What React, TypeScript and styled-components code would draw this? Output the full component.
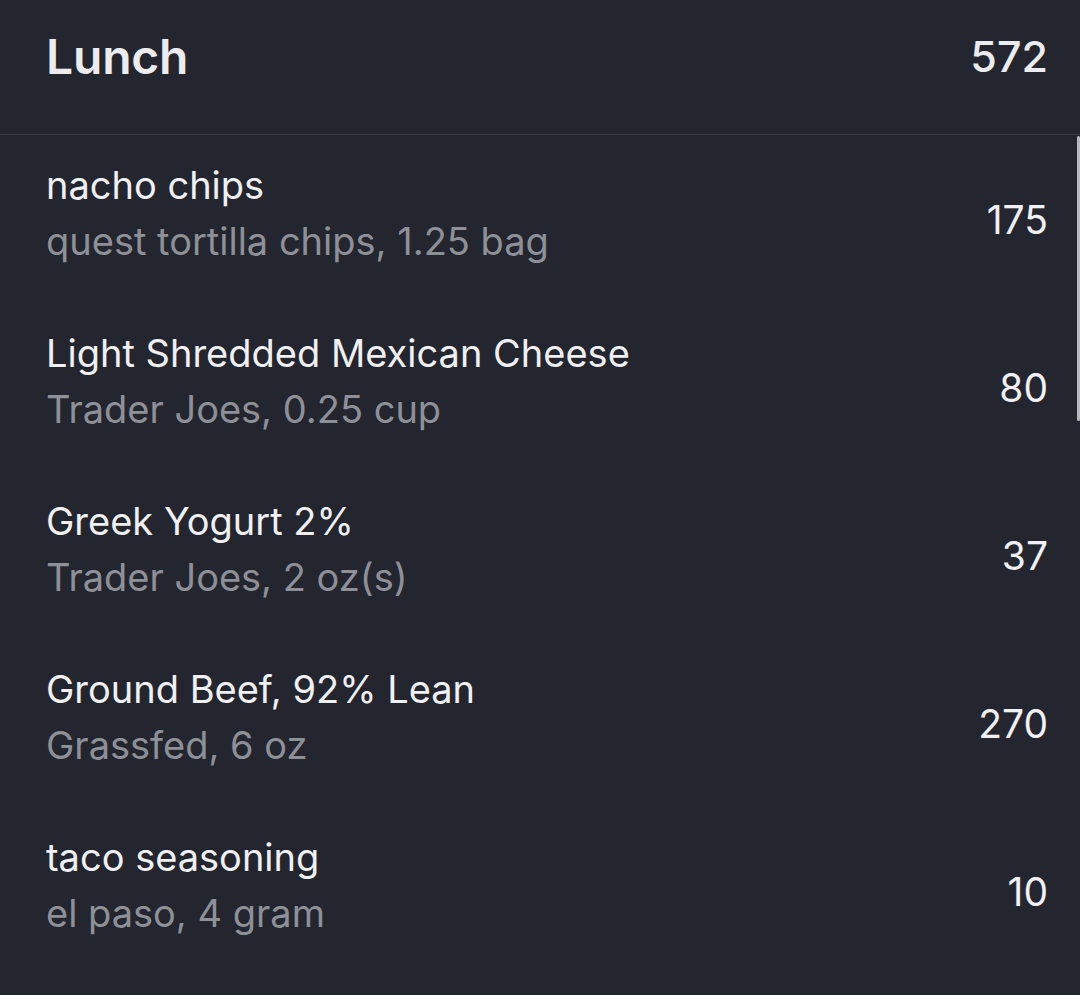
import React from "react";
import styled, { createGlobalStyle } from "styled-components";

const GlobalStyle = createGlobalStyle`
  html, body {
    margin: 0;
    padding: 0;
    background: #24262f;
  }
  body {
    font-family: Inter, "Noto Sans", sans-serif;
    -webkit-font-smoothing: antialiased;
  }
`;

const Screen = styled.div`
  position: relative;
  width: 1080px;
  height: 995px;
  overflow: hidden;
  background: #24262f;
  color: #eeeef0;
`;

const Header = styled.div`
  display: flex;
  justify-content: space-between;
  align-items: center;
  height: 135px;
  padding: 0 32px 22px 46px;
  border-bottom: 1px solid #383b45;
  box-sizing: border-box;
`;

const Title = styled.div`
  font-size: 48px;
  font-weight: 600;
  letter-spacing: -0.2px;
  color: #ececee;
`;

const Total = styled.div`
  font-size: 43px;
  font-weight: 500;
  color: #ececee;
`;

const List = styled.div`
  display: flex;
  flex-direction: column;
`;

const Row = styled.div`
  display: flex;
  align-items: center;
  justify-content: space-between;
  height: 168px;
  padding: 0 32px 0 46px;
  box-sizing: border-box;
`;

const Info = styled.div`
  display: flex;
  flex-direction: column;
  gap: 10px;
  padding-bottom: 12px;
`;

const Name = styled.div`
  font-size: 38px;
  line-height: 46px;
  color: #f0f0f2;
`;

const Detail = styled.div`
  font-size: 38px;
  line-height: 46px;
  color: #8e9098;
`;

const Calories = styled.div`
  font-size: 39px;
  color: #f0f0f2;
`;

const ScrollThumb = styled.div`
  position: absolute;
  right: 0;
  top: 136px;
  width: 3px;
  height: 285px;
  border-radius: 2px;
  background: #b9bac0;
`;

const foods = [
  { name: "nacho chips", detail: "quest tortilla chips, 1.25 bag", cal: 175 },
  { name: "Light Shredded Mexican Cheese", detail: "Trader Joes, 0.25 cup", cal: 80 },
  { name: "Greek Yogurt 2%", detail: "Trader Joes, 2 oz(s)", cal: 37 },
  { name: "Ground Beef, 92% Lean", detail: "Grassfed, 6 oz", cal: 270 },
  { name: "taco seasoning", detail: "el paso, 4 gram", cal: 10 },
];

export default function App() {
  return (
    <Screen>
      <GlobalStyle />
      <Header>
        <Title>Lunch</Title>
        <Total>572</Total>
      </Header>
      <List>
        {foods.map((f) => (
          <Row key={f.name}>
            <Info>
              <Name>{f.name}</Name>
              <Detail>{f.detail}</Detail>
            </Info>
            <Calories>{f.cal}</Calories>
          </Row>
        ))}
      </List>
      <ScrollThumb />
    </Screen>
  );
}
